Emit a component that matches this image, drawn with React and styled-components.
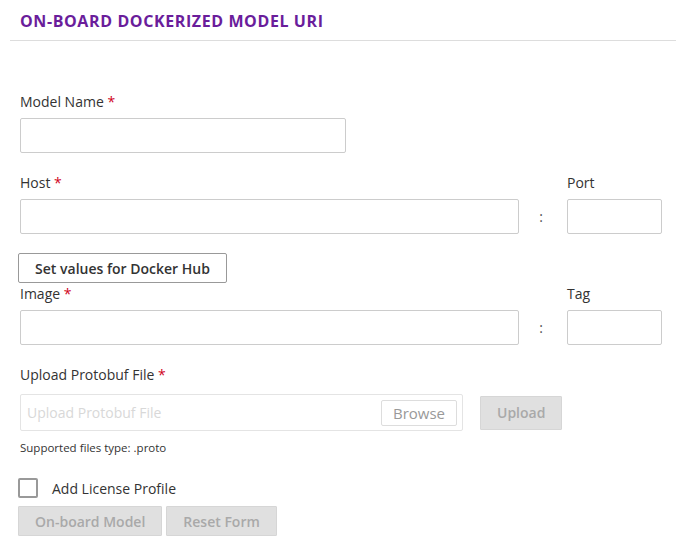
import React from "react";
import styled, { createGlobalStyle } from "styled-components";

const Global = createGlobalStyle`
  body {
    margin: 0;
    background: #fff;
    font-family: "Open Sans", "Noto Sans", sans-serif;
    color: #333;
  }
`;

const OnboardForm = () => {
  return (
    <Page>
      <Global />
      <Header>
        <h1>On-board Dockerized Model URI</h1>
      </Header>
      <Form>
        <Field>
          <Label>
            Model Name <Req>*</Req>
          </Label>
          <Input width="326px" />
        </Field>

        <Split top="20px">
          <Label>
            Host <Req>*</Req>
          </Label>
          <span />
          <Label>Port</Label>
          <Input />
          <Colon>:</Colon>
          <Input />
        </Split>

        <HubButton>Set values for Docker Hub</HubButton>

        <Split top="1px">
          <Label>
            Image <Req>*</Req>
          </Label>
          <span />
          <Label>Tag</Label>
          <Input />
          <Colon>:</Colon>
          <Input />
        </Split>

        <Field top="20px">
          <Label gap="9px">
            Upload Protobuf File <Req>*</Req>
          </Label>
          <UploadRow>
            <FileBox>
              <span>Upload Protobuf File</span>
              <Browse>Browse</Browse>
            </FileBox>
            <Disabled tall>Upload</Disabled>
          </UploadRow>
          <Hint>Supported files type: .proto</Hint>
        </Field>

        <Check>
          <Box />
          <span>Add License Profile</span>
        </Check>

        <Actions>
          <Disabled>On-board Model</Disabled>
          <Disabled>Reset Form</Disabled>
        </Actions>
      </Form>
    </Page>
  );
};

const Page = styled.div`
  width: 676px;
  overflow: hidden;
`;

const Header = styled.div`
  margin-left: 10px;
  padding: 11px 10px 9px;
  border-bottom: 1px solid #ddd;
  h1 {
    margin: 0;
    font-size: 16px;
    line-height: 20px;
    font-weight: 700;
    letter-spacing: 0.6px;
    text-transform: uppercase;
    color: #6a1d9b;
  }
`;

const Form = styled.div`
  padding: 51px 0 0 20px;
`;

const Field = styled.div`
  margin-top: ${(p) => p.top || "0"};
`;

const Label = styled.div`
  font-size: 14px;
  line-height: 20px;
  color: #333;
  margin-bottom: ${(p) => p.gap || "6px"};
`;

const Req = styled.span`
  color: #d0021b;
`;

const Input = styled.div`
  box-sizing: border-box;
  width: ${(p) => p.width || "auto"};
  height: 35px;
  border: 1px solid #ccc;
  border-radius: 2px;
  background: #fff;
`;

const Split = styled.div`
  display: grid;
  grid-template-columns: 499px 48px 95px;
  margin-top: ${(p) => p.top};
`;

const Colon = styled.div`
  display: flex;
  align-items: center;
  justify-content: center;
  font-size: 14px;
  color: #555;
  padding-right: 4px;
`;

const HubButton = styled.button`
  display: block;
  margin: 19px 0 0 -2px;
  box-sizing: border-box;
  height: 30px;
  width: 209px;
  padding: 0;
  border: 1px solid #999;
  border-radius: 2px;
  background: #fff;
  font-family: inherit;
  font-size: 14px;
  font-weight: 600;
  color: #333;
`;

const UploadRow = styled.div`
  display: flex;
  align-items: center;
  gap: 17px;
`;

const FileBox = styled.div`
  box-sizing: border-box;
  width: 443px;
  height: 37px;
  display: flex;
  align-items: center;
  justify-content: space-between;
  padding: 0 5px 0 6px;
  border: 1px solid #e4e4e4;
  border-radius: 2px;
  span {
    font-size: 14px;
    color: #d8d8d8;
  }
`;

const Browse = styled.div`
  box-sizing: border-box;
  width: 76px;
  height: 26px;
  display: flex;
  align-items: center;
  justify-content: center;
  border: 1px solid #ddd;
  border-radius: 2px;
  font-size: 15px;
  color: #999;
`;

const Disabled = styled.button`
  box-sizing: border-box;
  height: ${(p) => (p.tall ? "34px" : "30px")};
  padding: 0 16px;
  border: 1px solid #d6d6d6;
  border-radius: 1px;
  background: #e0e0e0;
  font-family: inherit;
  font-size: 14px;
  font-weight: 600;
  color: #a9a9a9;
`;

const Hint = styled.div`
  margin-top: 9px;
  font-size: 11.5px;
  line-height: 16px;
  color: #333;
`;

const Check = styled.label`
  display: flex;
  align-items: center;
  gap: 14px;
  margin: 22px 0 0 -2px;
  font-size: 14px;
  color: #333;
`;

const Box = styled.span`
  box-sizing: border-box;
  width: 20px;
  height: 20px;
  border: 2px solid #999;
  border-radius: 2px;
`;

const Actions = styled.div`
  display: flex;
  gap: 4px;
  margin: 8px 0 0 -2px;
`;

export default OnboardForm;
